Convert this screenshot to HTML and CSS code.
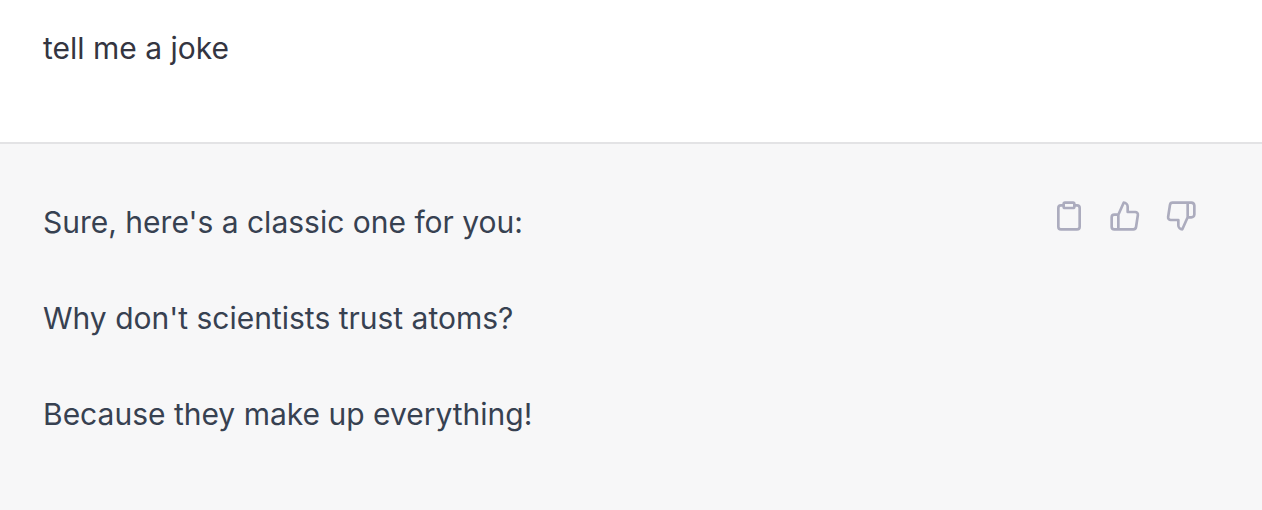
FILE: index.html
```html
<!DOCTYPE html>
<html lang="en">
<head>
<meta charset="utf-8">
<meta name="viewport" content="width=device-width, initial-scale=1">
<title>Chat</title>
<link rel="stylesheet" href="styles.css">
</head>
<body>
<main class="chat">
  <section class="message message-user">
    <p>tell me a joke</p>
  </section>
  <section class="message message-reply">
    <div class="reply-text">
      <p>Sure, here's a classic one for you:</p>
      <p>Why don't scientists trust atoms?</p>
      <p>Because they make up everything!</p>
    </div>
    <div class="actions">
      <button class="action" type="button" aria-label="Copy">
        <svg class="icon" viewBox="0 0 24 24"><path d="M16 4h2a2 2 0 0 1 2 2v14a2 2 0 0 1-2 2H6a2 2 0 0 1-2-2V6a2 2 0 0 1 2-2h2"/><rect x="8" y="2" width="8" height="4" rx="1"/></svg>
      </button>
      <button class="action" type="button" aria-label="Good response">
        <svg class="icon" viewBox="0 0 24 24"><path d="M14 9V5a3 3 0 0 0-3-3l-4 9v11h11.28a2 2 0 0 0 2-1.7l1.38-9a2 2 0 0 0-2-2.3zM7 22H4a2 2 0 0 1-2-2v-7a2 2 0 0 1 2-2h3"/></svg>
      </button>
      <button class="action" type="button" aria-label="Bad response">
        <svg class="icon" viewBox="0 0 24 24"><path d="M10 15v4a3 3 0 0 0 3 3l4-9V2H5.72a2 2 0 0 0-2 1.7l-1.38 9a2 2 0 0 0 2 2.3zm7-13h2.67A2.31 2.31 0 0 1 22 4v7a2.31 2.31 0 0 1-2.33 2H17"/></svg>
      </button>
    </div>
  </section>
</main>
</body>
</html>
```
FILE: styles.css
```css
* { box-sizing: border-box; }
body {
  margin: 0;
  background: #f7f7f8;
  font-family: Inter, "Liberation Sans", sans-serif;
  font-size: 30px;
  line-height: 48px;
  color: #374151;
}
p { margin: 0; }
.message { padding: 24px 61px 70px 43px; }
.message-user { background: #fff; color: #343541; border-bottom: 2px solid #e3e3e5; }
.message-reply { display: flex; justify-content: space-between; padding-top: 54px; }
.reply-text { display: grid; gap: 48px; }
.actions { display: flex; align-items: flex-start; gap: 16px; }
.action {
  display: flex;
  padding: 2px 4px;
  border: 0;
  background: none;
  color: #acacbe;
  cursor: pointer;
}
.icon {
  width: 32px;
  height: 32px;
  fill: none;
  stroke: currentColor;
  stroke-width: 2;
  stroke-linecap: round;
  stroke-linejoin: round;
}
```
